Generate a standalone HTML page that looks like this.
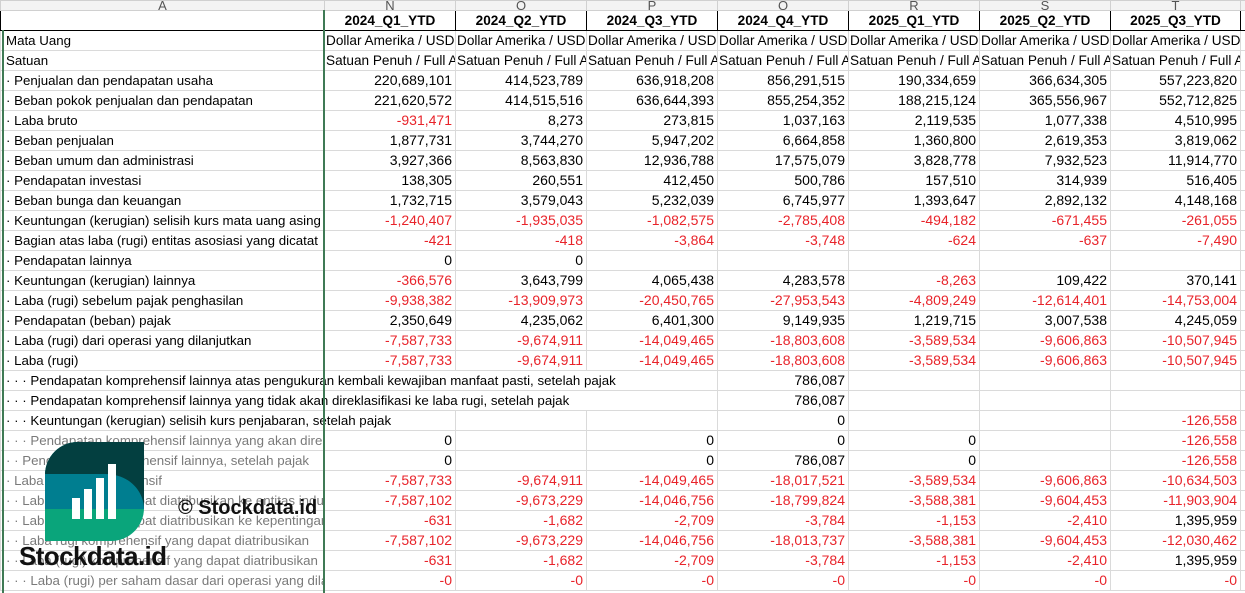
<!DOCTYPE html>
<html><head><meta charset="utf-8"><style>
body{margin:0;width:1245px;height:593px;overflow:hidden;background:#fff;position:relative;font-family:"Liberation Sans",sans-serif;}
table{border-collapse:collapse;table-layout:fixed;position:absolute;left:0;top:0;width:1260px;}
td{height:19px;padding:0 3px 0 0;border:1px solid #dadada;font-size:14px;text-align:right;white-space:nowrap;overflow:hidden;color:#000;line-height:19px;}
td.a{text-align:left;padding-left:5px;font-size:13.3px;}
td.o{overflow:visible;text-align:left;padding-left:5px;font-size:13.3px;}
td.t{text-align:left;padding-left:1px;font-size:13.6px;}
.g td.a{color:#7a7a7a}
.r{color:#e8232a}
tr.h td{font-weight:bold;text-align:center;border:1px solid #000;font-size:13.6px;padding:0}
tr.l td{height:9px;background:#f3f3f3;border-color:#d0d0d0;font-size:13px;line-height:4px;text-align:center;color:#555;overflow:hidden;padding:0}
.gl{position:absolute;top:10px;width:2px;height:583px;background:#3f7a55}
</style></head><body>
<table>
<colgroup><col style="width:324px"><col style="width:131px"><col style="width:131px"><col style="width:131px"><col style="width:131px"><col style="width:131px"><col style="width:131px"><col style="width:130px"><col style="width:20px"></colgroup>
<tr class="l"><td>A</td><td>N</td><td>O</td><td>P</td><td>Q</td><td>R</td><td>S</td><td>T</td><td></td></tr>
<tr class="h"><td></td><td>2024_Q1_YTD</td><td>2024_Q2_YTD</td><td>2024_Q3_YTD</td><td>2024_Q4_YTD</td><td>2025_Q1_YTD</td><td>2025_Q2_YTD</td><td>2025_Q3_YTD</td><td style="border:none;border-bottom:1px solid #000"></td></tr>
<tr><td class="a">Mata Uang</td><td class="t">Dollar Amerika / USD</td><td class="t">Dollar Amerika / USD</td><td class="t">Dollar Amerika / USD</td><td class="t">Dollar Amerika / USD</td><td class="t">Dollar Amerika / USD</td><td class="t">Dollar Amerika / USD</td><td class="t">Dollar Amerika / USD</td><td></td></tr>
<tr><td class="a">Satuan</td><td class="t">Satuan Penuh / Full A</td><td class="t">Satuan Penuh / Full A</td><td class="t">Satuan Penuh / Full A</td><td class="t">Satuan Penuh / Full A</td><td class="t">Satuan Penuh / Full A</td><td class="t">Satuan Penuh / Full A</td><td class="t">Satuan Penuh / Full A</td><td></td></tr>
<tr><td class="a">· Penjualan dan pendapatan usaha</td><td>220,689,101</td><td>414,523,789</td><td>636,918,208</td><td>856,291,515</td><td>190,334,659</td><td>366,634,305</td><td>557,223,820</td><td></td></tr>
<tr><td class="a">· Beban pokok penjualan dan pendapatan</td><td>221,620,572</td><td>414,515,516</td><td>636,644,393</td><td>855,254,352</td><td>188,215,124</td><td>365,556,967</td><td>552,712,825</td><td></td></tr>
<tr><td class="a">· Laba bruto</td><td class="r">-931,471</td><td>8,273</td><td>273,815</td><td>1,037,163</td><td>2,119,535</td><td>1,077,338</td><td>4,510,995</td><td></td></tr>
<tr><td class="a">· Beban penjualan</td><td>1,877,731</td><td>3,744,270</td><td>5,947,202</td><td>6,664,858</td><td>1,360,800</td><td>2,619,353</td><td>3,819,062</td><td></td></tr>
<tr><td class="a">· Beban umum dan administrasi</td><td>3,927,366</td><td>8,563,830</td><td>12,936,788</td><td>17,575,079</td><td>3,828,778</td><td>7,932,523</td><td>11,914,770</td><td></td></tr>
<tr><td class="a">· Pendapatan investasi</td><td>138,305</td><td>260,551</td><td>412,450</td><td>500,786</td><td>157,510</td><td>314,939</td><td>516,405</td><td></td></tr>
<tr><td class="a">· Beban bunga dan keuangan</td><td>1,732,715</td><td>3,579,043</td><td>5,232,039</td><td>6,745,977</td><td>1,393,647</td><td>2,892,132</td><td>4,148,168</td><td></td></tr>
<tr><td class="a">· Keuntungan (kerugian) selisih kurs mata uang asing</td><td class="r">-1,240,407</td><td class="r">-1,935,035</td><td class="r">-1,082,575</td><td class="r">-2,785,408</td><td class="r">-494,182</td><td class="r">-671,455</td><td class="r">-261,055</td><td></td></tr>
<tr><td class="a">· Bagian atas laba (rugi) entitas asosiasi yang dicatat</td><td class="r">-421</td><td class="r">-418</td><td class="r">-3,864</td><td class="r">-3,748</td><td class="r">-624</td><td class="r">-637</td><td class="r">-7,490</td><td></td></tr>
<tr><td class="a">· Pendapatan lainnya</td><td>0</td><td>0</td><td></td><td></td><td></td><td></td><td></td><td></td></tr>
<tr><td class="a">· Keuntungan (kerugian) lainnya</td><td class="r">-366,576</td><td>3,643,799</td><td>4,065,438</td><td>4,283,578</td><td class="r">-8,263</td><td>109,422</td><td>370,141</td><td></td></tr>
<tr><td class="a">· Laba (rugi) sebelum pajak penghasilan</td><td class="r">-9,938,382</td><td class="r">-13,909,973</td><td class="r">-20,450,765</td><td class="r">-27,953,543</td><td class="r">-4,809,249</td><td class="r">-12,614,401</td><td class="r">-14,753,004</td><td></td></tr>
<tr><td class="a">· Pendapatan (beban) pajak</td><td>2,350,649</td><td>4,235,062</td><td>6,401,300</td><td>9,149,935</td><td>1,219,715</td><td>3,007,538</td><td>4,245,059</td><td></td></tr>
<tr><td class="a">· Laba (rugi) dari operasi yang dilanjutkan</td><td class="r">-7,587,733</td><td class="r">-9,674,911</td><td class="r">-14,049,465</td><td class="r">-18,803,608</td><td class="r">-3,589,534</td><td class="r">-9,606,863</td><td class="r">-10,507,945</td><td></td></tr>
<tr><td class="a">· Laba (rugi)</td><td class="r">-7,587,733</td><td class="r">-9,674,911</td><td class="r">-14,049,465</td><td class="r">-18,803,608</td><td class="r">-3,589,534</td><td class="r">-9,606,863</td><td class="r">-10,507,945</td><td></td></tr>
<tr><td class="o" colspan="4">· · · Pendapatan komprehensif lainnya atas pengukuran kembali kewajiban manfaat pasti, setelah pajak</td><td>786,087</td><td></td><td></td><td></td><td></td></tr>
<tr><td class="o" colspan="4">· · · Pendapatan komprehensif lainnya yang tidak akan direklasifikasi ke laba rugi, setelah pajak</td><td>786,087</td><td></td><td></td><td></td><td></td></tr>
<tr><td class="o" colspan="2">· · · Keuntungan (kerugian) selisih kurs penjabaran, setelah pajak</td><td></td><td></td><td>0</td><td></td><td></td><td class="r">-126,558</td><td></td></tr>
<tr class="g"><td class="a">· · · Pendapatan komprehensif lainnya yang akan direklasifikasi</td><td>0</td><td></td><td>0</td><td>0</td><td>0</td><td></td><td class="r">-126,558</td><td></td></tr>
<tr class="g"><td class="a">· · Pendapatan komprehensif lainnya, setelah pajak</td><td>0</td><td></td><td>0</td><td>786,087</td><td>0</td><td></td><td class="r">-126,558</td><td></td></tr>
<tr class="g"><td class="a">· Laba (rugi) komprehensif</td><td class="r">-7,587,733</td><td class="r">-9,674,911</td><td class="r">-14,049,465</td><td class="r">-18,017,521</td><td class="r">-3,589,534</td><td class="r">-9,606,863</td><td class="r">-10,634,503</td><td></td></tr>
<tr class="g"><td class="a">· · Laba (rugi) yang dapat diatribusikan ke entitas induk</td><td class="r">-7,587,102</td><td class="r">-9,673,229</td><td class="r">-14,046,756</td><td class="r">-18,799,824</td><td class="r">-3,588,381</td><td class="r">-9,604,453</td><td class="r">-11,903,904</td><td></td></tr>
<tr class="g"><td class="a">· · Laba (rugi) yang dapat diatribusikan ke kepentingan</td><td class="r">-631</td><td class="r">-1,682</td><td class="r">-2,709</td><td class="r">-3,784</td><td class="r">-1,153</td><td class="r">-2,410</td><td>1,395,959</td><td></td></tr>
<tr class="g"><td class="a">· · Laba rugi komprehensif yang dapat diatribusikan</td><td class="r">-7,587,102</td><td class="r">-9,673,229</td><td class="r">-14,046,756</td><td class="r">-18,013,737</td><td class="r">-3,588,381</td><td class="r">-9,604,453</td><td class="r">-12,030,462</td><td></td></tr>
<tr class="g"><td class="a">· · Laba (rugi) komprehensif yang dapat diatribusikan</td><td class="r">-631</td><td class="r">-1,682</td><td class="r">-2,709</td><td class="r">-3,784</td><td class="r">-1,153</td><td class="r">-2,410</td><td>1,395,959</td><td></td></tr>
<tr class="g"><td class="a">· · · Laba (rugi) per saham dasar dari operasi yang dilanjutkan</td><td class="r">-0</td><td class="r">-0</td><td class="r">-0</td><td class="r">-0</td><td class="r">-0</td><td class="r">-0</td><td class="r">-0</td><td></td></tr>
</table>
<div class="gl" style="left:323px"></div>
<div class="gl" style="left:2px;top:30px;height:563px"></div>
<svg style="position:absolute;left:45px;top:442px" width="99" height="99" viewBox="0 0 99 99">
<defs><clipPath id="c"><path d="M33 0H99V66A33 33 0 0 1 66 99H0V33A33 33 0 0 1 33 0Z"/></clipPath></defs>
<g clip-path="url(#c)">
<rect width="99" height="99" fill="#0aa57b"/>
<rect width="99" height="67" fill="#007e90"/>
<path d="M0 0H99V67C99 50 85 32 60 32H0Z" fill="#033f40"/>
</g>
<rect x="27" y="56" width="8" height="21" fill="#fff"/>
<rect x="39" y="47" width="8" height="30" fill="#fff"/>
<rect x="51" y="36" width="8" height="41" fill="#fff"/>
<rect x="63" y="22" width="8" height="55" fill="#fff"/>
</svg>
<div style="position:absolute;left:178px;top:497px;font-size:20px;font-weight:bold;color:#111;white-space:nowrap">© Stockdata.id</div>
<div style="position:absolute;left:19px;top:541px;font-size:26px;font-weight:bold;color:#111;letter-spacing:-0.6px;white-space:nowrap">Stockdata.id</div>
</body></html>
